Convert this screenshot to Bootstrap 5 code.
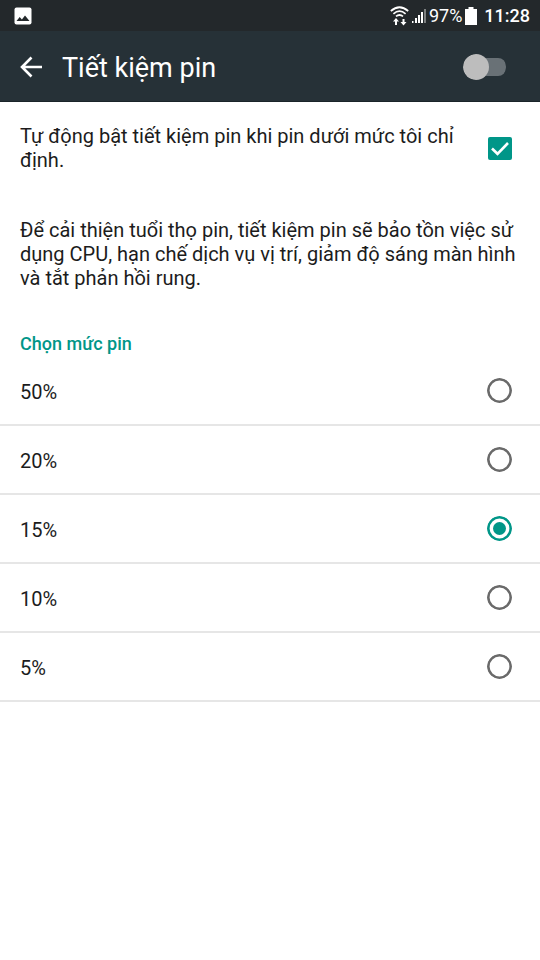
<!DOCTYPE html>
<html lang="vi">
<head>
<meta charset="utf-8">
<meta name="viewport" content="width=device-width, initial-scale=1">
<title>Tiết kiệm pin</title>
<link href="https://cdn.jsdelivr.net/npm/bootstrap@5.3.0/dist/css/bootstrap.min.css" rel="stylesheet">
<style>
  body { font-family: Roboto, "Noto Sans", sans-serif; font-size: 20px; line-height: 24px; color: #1c1c1c; background: #fff; }
  .status-bar { background: #23282b; height: 31px; padding: 1px 10px 0 14px; color: #fff; font-size: 18px; }
  .status-gap { gap: 3px; }
  .clock { font-weight: 500; padding-left: 4px; }
  .app-bar { background: #263137; height: 71px; padding: 2px 34px 0 20px; color: #fff; border-bottom: 1px solid #1a2429; }
  .app-title { font-size: 27px; line-height: 32px; font-weight: 400; padding-top: 2px; }
  .gutter { padding-left: 20px; padding-right: 28px; }
  .auto-row { padding-top: 22px; padding-bottom: 21px; }
  .note { padding: 25px 20px 0; }
  .section-title { font-size: 18px; line-height: 24px; font-weight: 500; color: #009688; padding: 42px 20px 1px; }
  .level { height: 69px; border-bottom: 2px solid #e6e6e6; }
  .level label { padding-top: 2px; }
  .form-check-input.power-switch, .form-check-input.auto-box, .form-check-input.level-radio { margin: 0; flex-shrink: 0; box-shadow: none; background-size: 100% 100%; background-repeat: no-repeat; }
  .form-check-input.power-switch { width: 43px; height: 26px; border: 0; border-radius: 13px; background-color: transparent;
    background-image: url("data:image/svg+xml,%3Csvg xmlns='http://www.w3.org/2000/svg' viewBox='0 0 43 26'%3E%3Crect x='6' y='4' width='37' height='18' rx='8' fill='%23697176'/%3E%3Ccircle cx='13' cy='13' r='13' fill='%23bdbdbd'/%3E%3C/svg%3E"); }
  .form-check-input.auto-box { width: 24px; height: 23px; border: 0; border-radius: 2px; }
  .form-check-input.auto-box:checked { background-color: #009688;
    background-image: url("data:image/svg+xml,%3Csvg xmlns='http://www.w3.org/2000/svg' viewBox='0 0 23 23'%3E%3Cpath d='M3.5 11.5l5.500 5.3L19.500 6' fill='none' stroke='white' stroke-width='2.6'/%3E%3C/svg%3E"); }
  .form-check-input.level-radio { width: 25px; height: 25px; border: 0; background-color: #fff;
    background-image: url("data:image/svg+xml,%3Csvg xmlns='http://www.w3.org/2000/svg' viewBox='0 0 25 25'%3E%3Ccircle cx='12.5' cy='12.5' r='11.2' fill='none' stroke='%236a6a6a' stroke-width='2.6'/%3E%3C/svg%3E"); }
  .form-check-input.level-radio:checked { background-color: #fff;
    background-image: url("data:image/svg+xml,%3Csvg xmlns='http://www.w3.org/2000/svg' viewBox='0 0 25 25'%3E%3Ccircle cx='12.5' cy='12.5' r='11.2' fill='none' stroke='%23009688' stroke-width='2.6'/%3E%3Ccircle cx='12.5' cy='12.5' r='6.5' fill='%23009688'/%3E%3C/svg%3E"); }
</style>
<script src="https://cdn.jsdelivr.net/npm/bootstrap@5.3.0/dist/js/bootstrap.bundle.min.js" defer></script>
</head>
<body>
<div class="status-bar d-flex align-items-center justify-content-between">
  <svg width="18" height="18" viewBox="0 0 18 18" aria-hidden="true"><rect x=".5" y=".5" width="17" height="17" rx="2" fill="#fff"/><path d="M2.5 14l3.200-4 2.200 2.600L11 8.500l4.500 5.500z" fill="#23282b"/></svg>
  <div class="d-flex align-items-center status-gap">
    <svg width="19" height="20" viewBox="0 0 19 20" aria-hidden="true" fill="none" stroke="#fff" stroke-width="1.7"><path d="M.8 5Q9.500-2.500 18.200 5M3.400 7.800Q9.500 2.600 15.600 7.800M6 10.400Q9.500 7.600 13 10.400"/><path d="M6 19v-4M13.500 13v4" stroke-width="2"/><path d="M6 12l3 3.500H3zM13.500 19.500l3-3.500h-6z" fill="#fff" stroke="none"/></svg>
    <svg width="14" height="16" viewBox="0 0 14 16" aria-hidden="true" fill="#fff"><path d="M0 13h1.500v2H0zM3 10h2v5H3zM6 7h2v8H6zM9 4h2v11H9z"/><path d="M12 1h2v14h-2z" opacity=".4"/></svg>
    <span>97%</span>
    <svg width="12" height="18" viewBox="0 0 12 18" aria-hidden="true"><path d="M3.500 0h5v2H12v16H0V2h3.500z" fill="#fff"/></svg>
    <span class="clock">11:28</span>
  </div>
</div>
<header class="app-bar d-flex align-items-center">
  <button type="button" class="btn p-0 border-0 d-flex text-white" aria-label="Quay lại">
    <svg width="22" height="22" viewBox="0 0 22 22" fill="none" stroke="#fff" stroke-width="2.600" aria-hidden="true"><path d="M11.500 1.500L2 11l9.500 9.500M2 11h20"/></svg>
  </button>
  <h1 class="app-title flex-grow-1 mb-0 ms-3 ps-1">Tiết kiệm pin</h1>
  <input class="form-check-input power-switch" type="checkbox" role="switch" aria-label="Tiết kiệm pin">
</header>
<main>
  <div class="auto-row gutter d-flex align-items-center justify-content-between gap-3">
    <label for="auto">Tự động bật tiết kiệm pin khi pin dưới mức tôi chỉ định.</label>
    <input class="form-check-input auto-box" type="checkbox" id="auto" checked>
  </div>
  <p class="note mb-0">Để cải thiện tuổi thọ pin, tiết kiệm pin sẽ bảo tồn việc sử dụng CPU, hạn chế dịch vụ vị trí, giảm độ sáng màn hình và tắt phản hồi rung.</p>
  <h2 class="section-title mb-0" id="levels">Chọn mức pin</h2>
  <div role="radiogroup" aria-labelledby="levels">
    <div class="level gutter d-flex align-items-center"><label class="flex-grow-1" for="l50">50%</label><input class="form-check-input level-radio" type="radio" name="level" id="l50"></div>
    <div class="level gutter d-flex align-items-center"><label class="flex-grow-1" for="l20">20%</label><input class="form-check-input level-radio" type="radio" name="level" id="l20"></div>
    <div class="level gutter d-flex align-items-center"><label class="flex-grow-1" for="l15">15%</label><input class="form-check-input level-radio" type="radio" name="level" id="l15" checked></div>
    <div class="level gutter d-flex align-items-center"><label class="flex-grow-1" for="l10">10%</label><input class="form-check-input level-radio" type="radio" name="level" id="l10"></div>
    <div class="level gutter d-flex align-items-center"><label class="flex-grow-1" for="l5">5%</label><input class="form-check-input level-radio" type="radio" name="level" id="l5"></div>
  </div>
</main>
</body>
</html>
